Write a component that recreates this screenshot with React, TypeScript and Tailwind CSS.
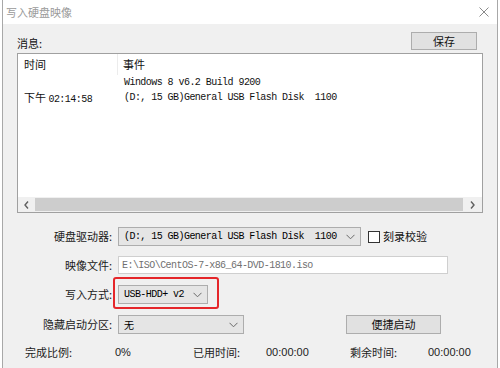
import React from 'react';

const cjk = "'Noto Sans CJK SC', 'Liberation Sans', sans-serif";
const mono = "'Liberation Mono', 'Noto Sans CJK SC', monospace";

const Chevron = () => (
  <svg width="9" height="6" viewBox="0 0 9 6" className="shrink-0">
    <polyline points="0.5,0.8 4.5,4.8 8.5,0.8" fill="none" stroke="#6a6a6a" strokeWidth="1" />
  </svg>
);

const Combo = ({ text, width, font = mono }: { text: string; width: string; font?: string }) => (
  <div
    className={`${width} h-[19px] flex items-center justify-between pl-[5px] pr-[5px] bg-[#e5e5e5] border border-[#adadad] text-[10px] tracking-[-0.55px] text-black whitespace-pre`}
    style={{ fontFamily: font }}
  >
    <span>{text}</span>
    <Chevron />
  </div>
);

const Label = ({ children }: { children: React.ReactNode }) => (
  <div className="w-[101px] pr-[6px] text-right text-[11px] text-[#1a1a1a] shrink-0 leading-none">{children}</div>
);

const App = () => {
  return (
    <div className="w-[500px] h-[368px] bg-white overflow-hidden" style={{ fontFamily: cjk }}>
      <div className="ml-[2px] w-[496px] h-[368px] border-x border-[#a8a8a8] flex flex-col">
        {/* title bar */}
        <div className="h-[24px] bg-white flex items-center justify-between pl-[3px] pr-[8px] shrink-0">
          <span className="text-[11px] text-[#9a9a9a]">写入硬盘映像</span>
          <svg width="10" height="10" viewBox="0 0 10 10">
            <path d="M0.5 0.5 L9.5 9.5 M9.5 0.5 L0.5 9.5" stroke="#8a8a8a" strokeWidth="1" />
          </svg>
        </div>

        <div className="flex-1 bg-[#f0f0f0] px-[14px] flex flex-col">
          {/* messages header */}
          <div className="mt-[9px] h-[17px] flex items-end justify-between">
            <span className="text-[11px] text-[#111] leading-none mb-[1px]">消息:</span>
            <button className="mr-[6px] w-[66px] h-[18px] bg-[#e1e1e1] border border-[#adadad] text-[11px] text-[#111] leading-none">
              保存
            </button>
          </div>

          {/* list view */}
          <div className="mt-[3px] h-[160px] bg-white border border-[#a0a0a0] flex flex-col">
            <div className="flex-1 flex flex-col">
              <div className="h-[21px] flex text-[11px] text-[#111]">
                <div className="w-[100px] pl-[6px] flex items-center border-r border-[#ececec]">时间</div>
                <div className="pl-[5px] flex items-center">事件</div>
              </div>
              <div
                className="h-[15px] flex items-center text-[10px] tracking-[-0.55px] text-[#111] whitespace-pre"
                style={{ fontFamily: mono }}
              >
                <div className="w-[100px]" />
                <div className="pl-[6px]">Windows 8 v6.2 Build 9200</div>
              </div>
              <div
                className="h-[15px] flex items-center text-[10px] tracking-[-0.55px] text-[#111] whitespace-pre"
                style={{ fontFamily: mono }}
              >
                <div className="w-[100px] pl-[6px]">
                  <span className="text-[11px] tracking-normal" style={{ fontFamily: cjk }}>下午 </span>02:14:58
                </div>
                <div className="pl-[6px]">(D:, 15 GB)General USB Flash Disk  1100</div>
              </div>
            </div>
            {/* horizontal scrollbar */}
            <div className="h-[15px] bg-[#f0f0f0] flex items-center">
              <div className="w-[17px] flex justify-center">
                <svg width="5" height="8" viewBox="0 0 5 8">
                  <polyline points="4,0.5 1,4 4,7.5" fill="none" stroke="#606060" strokeWidth="1.4" />
                </svg>
              </div>
              <div className="flex-1 h-[13px] bg-[#cdcdcd]" />
              <div className="w-[19px] flex justify-center">
                <svg width="5" height="8" viewBox="0 0 5 8">
                  <polyline points="1,0.5 4,4 1,7.5" fill="none" stroke="#606060" strokeWidth="1.4" />
                </svg>
              </div>
            </div>
          </div>

          {/* drive */}
          <div className="mt-[14px] flex items-center">
            <Label>硬盘驱动器:</Label>
            <Combo text="(D:, 15 GB)General USB Flash Disk  1100" width="w-[243px]" />
            <div className="ml-[7px] w-[12px] h-[12px] bg-white border border-[#333]" />
            <span className="ml-[3px] text-[11px] text-[#111] leading-none">刻录校验</span>
          </div>

          {/* image file */}
          <div className="mt-[10px] flex items-center">
            <Label>映像文件:</Label>
            <div
              className="w-[330px] h-[18px] bg-white border border-[#cfcfcf] flex items-center pl-[3px] text-[10px] tracking-[-0.55px] text-[#707070]"
              style={{ fontFamily: mono }}
            >
              E:\ISO\CentOS-7-x86_64-DVD-1810.iso
            </div>
          </div>

          {/* write mode */}
          <div className="mt-[11px] flex items-center">
            <Label>写入方式:</Label>
            <div className="relative">
              <Combo text="USB-HDD+ v2" width="w-[90px]" />
              <div className="absolute -left-[5px] -top-[8px] -right-[11px] -bottom-[5px] border-[2.5px] border-[#e5262a] rounded-[3px]" />
            </div>
          </div>

          {/* hidden partition */}
          <div className="mt-[11px] flex items-center">
            <Label>隐藏启动分区:</Label>
            <Combo text="无" width="w-[126px]" font={cjk} />
            <button className="ml-[102px] w-[95px] h-[19px] bg-[#e1e1e1] border border-[#adadad] text-[11px] text-[#111] leading-none">
              便捷启动
            </button>
          </div>

          {/* progress */}
          <div className="mt-[13px] pl-[8px] flex items-center text-[11px] text-[#222] leading-none">
            <span className="w-[90px]">完成比例:</span>
            <span className="w-[78px]" style={{ fontFamily: "'Liberation Sans', sans-serif" }}>0%</span>
            <span className="w-[73px]">已用时间:</span>
            <span className="w-[84px]" style={{ fontFamily: "'Liberation Sans', sans-serif" }}>00:00:00</span>
            <span className="w-[78px]">剩余时间:</span>
            <span style={{ fontFamily: "'Liberation Sans', sans-serif" }}>00:00:00</span>
          </div>
        </div>
      </div>
    </div>
  );
};

export default App;
